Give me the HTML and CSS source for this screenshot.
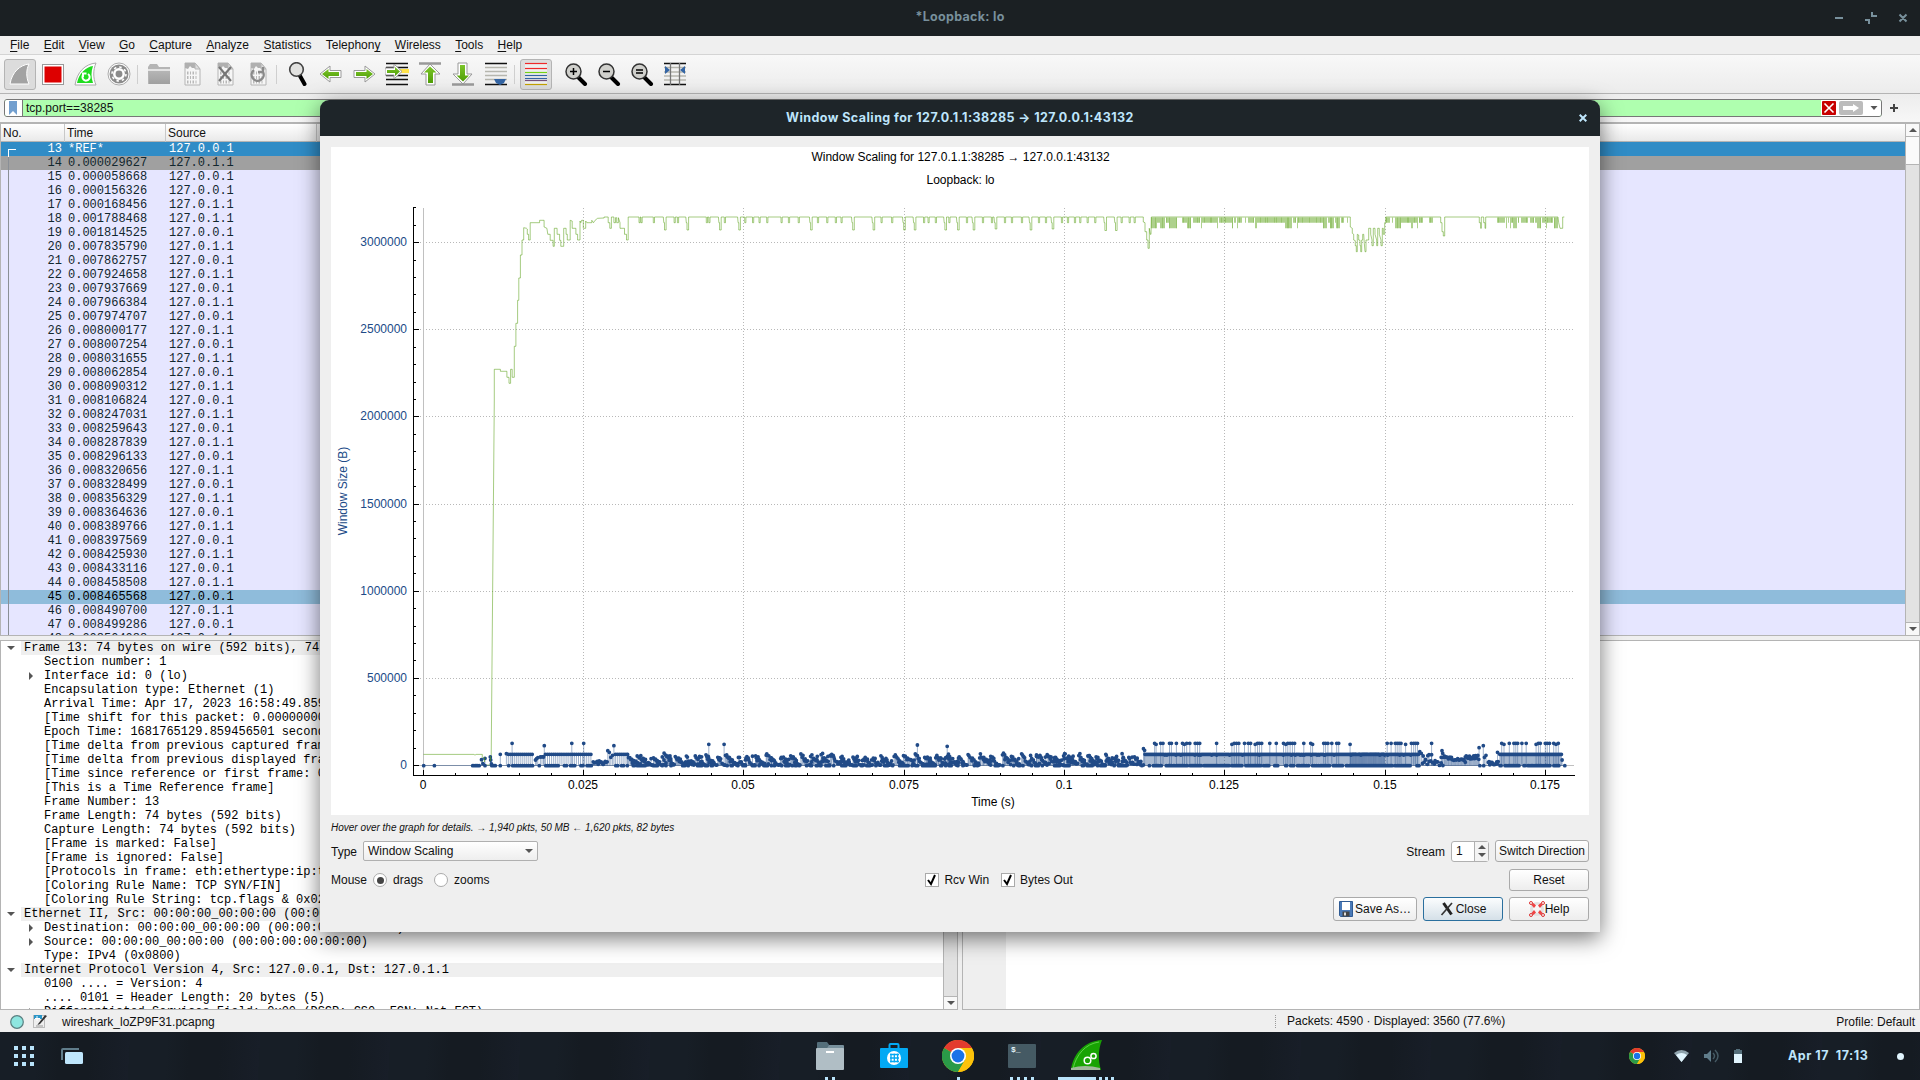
FILE: index.html
```html
<!DOCTYPE html>
<html lang="en">
<head>
<meta charset="utf-8">
<title>*Loopback: lo</title>
<link rel="stylesheet" href="styles.css">
</head>
<body>
<svg width="0" height="0" class="defs">
  <defs>
    <linearGradient id="gGreen" x1="0" y1="0" x2="0" y2="1"><stop offset="0" stop-color="#7cc52a"/><stop offset="1" stop-color="#4f9e06"/></linearGradient>
    <linearGradient id="gGrey" x1="0" y1="0" x2="0" y2="1"><stop offset="0" stop-color="#b4b4b4"/><stop offset="1" stop-color="#a0a0a0"/></linearGradient>
    <symbol id="sheet" viewBox="0 0 24 24"><path d="M5 1h10l5 6v16H5z" fill="#f6f6f6" stroke="#b4b4b4"/><path d="M5 1h10v5h-3l-2-2-2 3-3-1z" fill="#b0b0b0"/><path d="M15 1v6h5z" fill="#ddd" stroke="#b4b4b4"/><g stroke="#b8b8b8" stroke-width="3" stroke-dasharray="1.5 1.5 1 1.5"><path d="M7 11h10M7 15.500h10M7 20h10"/></g></symbol>
    <symbol id="lens" viewBox="0 0 24 24"><path d="M14 15l7 7" stroke="#000" stroke-width="4" stroke-linecap="round"/><circle cx="9.500" cy="9.500" r="7.500" fill="#d0d0cc" stroke="#333" stroke-width="1.500"/></symbol>
    <symbol id="chrome" viewBox="0 0 32 32"><circle cx="16" cy="16" r="16" fill="#fbbc05"/><path d="M16 16L2.100 8A16 16 0 0 1 29.900 8H16z" fill="#e33b2e"/><path d="M2.100 8A16 16 0 0 0 16 32l7-12-7-4z" fill="#2a9a48"/><path d="M16 8h13.900A16 16 0 0 1 16 32l7-12z" fill="#fcc20a"/><circle cx="16" cy="16" r="8" fill="#fff"/><circle cx="16" cy="16" r="6.400" fill="#1a73e8"/></symbol>
  </defs>
</svg>

<div class="desktop">
  <header class="titlebar">
    <span class="title">*Loopback: lo</span>
    <svg class="winbtns" width="90" height="36" fill="none" stroke="#78909c" stroke-width="2"><path d="M5 18h8M35 20h4v4M42 12v4h5M69.500 14.500l7 7M76.500 14.500l-7 7"/></svg>
  </header>

  <nav class="menubar">
    <span><u>F</u>ile</span><span><u>E</u>dit</span><span><u>V</u>iew</span><span><u>G</u>o</span><span><u>C</u>apture</span><span><u>A</u>nalyze</span><span><u>S</u>tatistics</span><span>Telephon<u>y</u></span><span><u>W</u>ireless</span><span><u>T</u>ools</span><span><u>H</u>elp</span>
  </nav>

  <div class="toolbar">
    <span class="tool pressed"><svg viewBox="0 0 24 24"><path d="M2 22C4 10 12 3 21 2c-3 6-3 13 0 20z" fill="#a3a3a3" stroke="#fff"/></svg></span>
    <span class="tool"><svg viewBox="0 0 24 24"><rect x="1.500" y="2.500" width="21" height="20" fill="#fff" stroke="#999"/><rect x="3.500" y="4.500" width="17" height="16" fill="#d00"/></svg></span>
    <span class="tool"><svg viewBox="0 0 24 24"><path d="M1 23C3 10 11 2 22 1c-3 7-3 15 0 22z" fill="#fff" stroke="#aaa"/><path d="M3 21C5 11 12 5 19 4c-2 6-2 11 0 17z" fill="#1fdc1f"/><path d="M9.500 12.500a3.600 3.600 0 1 0 4.500-.5M9 15V11.500h3.500" fill="none" stroke="#fff" stroke-width="2"/></svg></span>
    <span class="tool"><svg viewBox="0 0 24 24"><circle cx="12" cy="12" r="11" fill="#fff" stroke="#aaa"/><circle cx="12" cy="12" r="9.500" fill="#8b8b8b"/><circle cx="12" cy="12" r="4.700" fill="none" stroke="#fff" stroke-width="2.500"/><circle cx="12" cy="12" r="7" fill="none" stroke="#fff" stroke-width="1.500" stroke-dasharray="2.500 3"/></svg></span>
    <i class="sep"></i>
    <span class="tool"><svg viewBox="0 0 24 24"><path d="M1 5l2-3h7l2 3h11v17H1z" fill="#b5b5b5"/><path d="M1 7h22v2H1z" fill="#e4e4e4"/><path d="M2 10h21v12H2z" fill="url(#gGrey)"/></svg></span>
    <span class="tool"><svg viewBox="0 0 24 24"><use href="#sheet"/></svg></span>
    <span class="tool"><svg viewBox="0 0 24 24"><use href="#sheet"/><path d="M6 5l12 14M18 5L6 19" stroke="#777" stroke-width="2.200"/></svg></span>
    <span class="tool"><svg viewBox="0 0 24 24"><use href="#sheet"/><path d="M8 8a6 6 0 1 0 9 2M17 5v5h-5" fill="none" stroke="#8a8a8a" stroke-width="2.400"/></svg></span>
    <i class="sep wide"></i>
    <span class="tool"><svg viewBox="0 0 24 24"><path d="M13.500 13l5 9" stroke="#000" stroke-width="4" stroke-linecap="round"/><circle cx="10.500" cy="7.500" r="6.800" fill="#e2e2e0" stroke="#444" stroke-width="1.600"/></svg></span>
    <span class="tool"><svg viewBox="0 0 24 24"><path d="M1 12l10-8v4.500h11v7H11V20z" fill="#fff" stroke="#999"/><path d="M3 12l6.500-5v3H20v4H9.500v3z" fill="url(#gGreen)"/></svg></span>
    <span class="tool"><svg viewBox="0 0 24 24"><path d="M23 12L13 4v4.500H2v7h11V20z" fill="#fff" stroke="#999"/><path d="M21 12l-6.500-5v3H4v4h10.500v3z" fill="url(#gGreen)"/></svg></span>
    <span class="tool"><svg viewBox="0 0 24 24"><path d="M1 1.500h22M1 5.500h22M1 9.500h22M1 13.500h22M1 17.500h22M1 22.500h22" stroke="#111" stroke-width="1.500"/><path d="M14 7h10v4H14z" fill="#ffe34a"/><path d="M17 9.500L9 2v4H0v7h9v4z" fill="#fff" stroke="#999"/><path d="M15 9.500l-5-4.500v3H2v3h8v3z" fill="url(#gGreen)"/></svg></span>
    <span class="tool"><svg viewBox="0 0 24 24"><path d="M1 1.500h22" stroke="#999" stroke-width="2.500"/><path d="M12 2l10 10h-5v11H8V12H3z" fill="#fff" stroke="#999"/><path d="M12 4.500l6.500 6H15V21h-5V10.500H6z" fill="url(#gGreen)"/></svg></span>
    <span class="tool"><svg viewBox="0 0 24 24"><path d="M1 22.500h22" stroke="#999" stroke-width="2.500"/><path d="M12 22L2 12h5V1h9v11h5z" fill="#fff" stroke="#999"/><path d="M12 19.500l-6.500-6H9V3h5v10.500h4z" fill="url(#gGreen)"/></svg></span>
    <span class="tool"><svg viewBox="0 0 24 24"><path d="M1 1.500h22M1 22.500h22" stroke="#111" stroke-width="1.500"/><path d="M1 5.500h22M1 9.500h22M1 13.500h22M1 17.500h22" stroke="#b6b6ae" stroke-width="1.500"/><path d="M10 17h12l-2 4-4 2-4-2z" fill="#3465a4"/></svg></span>
    <i class="sep thin"></i>
    <span class="tool pressed"><svg viewBox="0 0 24 24"><path d="M1 1h22v22H1z" fill="#eee"/><g stroke-width="1.200"><path d="M1 1.500h22" stroke="#ef2929"/><path d="M1 6.500h22" stroke="#ef2929"/><path d="M1 10.500h22" stroke="#73d216"/><path d="M1 13.500h22" stroke="#3465a4"/><path d="M1 16.500h22" stroke="#3465a4"/><path d="M1 18.500h22" stroke="#75507b"/><path d="M1 22.500h22" stroke="#c4a000"/></g></svg></span>
    <i class="sep none"></i>
    <span class="tool"><svg viewBox="0 0 24 24"><use href="#lens"/><path d="M6 9.500h7M9.500 6v7" stroke="#000" stroke-width="1.500"/></svg></span>
    <span class="tool"><svg viewBox="0 0 24 24"><use href="#lens"/><path d="M6 9.500h7" stroke="#000" stroke-width="1.500"/></svg></span>
    <span class="tool"><svg viewBox="0 0 24 24"><use href="#lens"/><path d="M6 8h7M6 11h7" stroke="#000" stroke-width="1.300"/></svg></span>
    <span class="tool"><svg viewBox="0 0 24 24"><path d="M1 1.500h22M1 22.500h22" stroke="#111" stroke-width="1.500"/><path d="M1 5.500h22M1 10h22M1 14h22M1 18h22" stroke="#b6b6ae" stroke-width="1.500"/><path d="M7.500 1v22M16.500 1v22" stroke="#777" stroke-width="1.300"/><path d="M2 4l5 4-5 4zM22 4l-5 4 5 4z" fill="#3465a4"/></svg></span>
  </div>

  <div class="filterbar">
    <div class="filter">
      <span class="bookmark"><svg width="8" height="14"><path d="M0 0h8v14l-4-4-4 4z" fill="#729fcf"/></svg></span>
      <span class="expr">tcp.port==38285</span>
      <span class="acts">
        <svg width="14" height="14"><rect width="14" height="14" rx="1" fill="#c80000"/><path d="M2.500 2.500l9 9M11.500 2.500l-9 9" stroke="#fff" stroke-width="1.600"/></svg>
        <svg width="24" height="14"><rect width="24" height="14" rx="2" fill="#bcbcbc"/><path d="M4 5h10V3l6 4-6 4V9H4z" fill="#fff"/></svg>
        <svg width="10" height="14"><path d="M1.500 5h7L5 9z" fill="#555"/></svg>
      </span>
    </div>
    <svg class="plus" width="8" height="8"><path d="M4 0v8M0 4h8" stroke="#444" stroke-width="2"/></svg>
  </div>

  <section class="packets">
    <div class="plist">
      <div class="phead"><span>No.</span><span>Time</span><span>Source</span><span></span></div>
      <div class="prows" id="packetRows"></div>
    </div>
    <div class="scroll"><i class="up"></i><b class="thumb"></b><em></em><i class="down"></i></div>
  </section>

  <section class="lower">
    <div class="pane tree">
      <div class="rows" id="detailRows"></div>
      <div class="scroll"><i class="up"></i><b class="thumb tall"></b><em></em><i class="down"></i></div>
    </div>
    <div class="pane bytes"><div class="gutter"></div></div>
  </section>

  <footer class="status">
    <svg width="14" height="14"><circle cx="7" cy="7" r="6.300" fill="#8ee6e0" stroke="#5a7f80" stroke-width="1.200"/></svg>
    <svg class="note" width="15" height="15"><rect x=".5" y="1.500" width="11" height="12" fill="#eee" stroke="#bbb"/><rect x="1" y="1" width="8" height="4" fill="#2a96c8"/><path d="M4 2v5M2 4.500h5" stroke="#fff"/><path d="M5 10l7-9 2 1-7 8-2.500 1z" fill="#333"/><path d="M3 12h7" stroke="#999"/></svg>
    <span class="file">wireshark_loZP9F31.pcapng</span>
    <span class="count">Packets: 4590 · Displayed: 3560 (77.6%)</span>
    <span class="profile">Profile: Default</span>
  </footer>

  <div class="taskbar">
    <svg class="apps" width="20" height="20" fill="#b9e4fb"><path d="M0 0h4v4H0zM8 0h4v4H8zM16 0h4v4h-4zM0 8h4v4H0zM8 8h4v4H8zM16 8h4v4h-4zM0 16h4v4H0zM8 16h4v4H8zM16 16h4v4h-4z"/></svg>
    <svg class="spaces" width="22" height="16"><path d="M1 12V2q0-1 1-1h16" fill="none" stroke="#607d8b" stroke-width="2"/><rect x="4" y="4" width="18" height="12" rx="1.500" fill="#bfe6fc"/></svg>
    <div class="dock">
      <div class="app"><svg width="32" height="32"><path d="M3 7V3q0-1 1-1h9l3 4v4H3z" fill="#546e7a"/><path d="M15 5h14q1 0 1 1v4H12z" fill="#78909c"/><rect x="2" y="8" width="28" height="22" rx="1" fill="#b0bec5"/><rect x="12" y="11" width="8" height="2" fill="#fff"/></svg><p><i></i><i></i></p></div>
      <div class="app"><svg width="32" height="32"><path d="M11.500 8V5q0-1 1-1h7q1 0 1 1v3" fill="none" stroke="#03a9f4" stroke-width="2"/><rect x="2" y="8" width="28" height="20" rx="1" fill="#03a9f4"/><circle cx="16" cy="18" r="7" fill="#fff"/><path d="M12 14.500h9M12 18h9M12 21.500h9M13 13.500v9M16.300 13.500v9M19.600 13.500v9" stroke="#03a9f4" stroke-width="1.300"/></svg><p></p></div>
      <div class="app"><svg width="32" height="32"><use href="#chrome"/></svg><p><i></i></p></div>
      <div class="app"><svg width="32" height="32"><rect x="2" y="4" width="28" height="24" rx="1" fill="#455a64"/></svg><span class="prompt">$_</span><p class="four"><i></i><i></i><i></i><i></i></p></div>
      <div class="app"><svg width="32" height="32"><path d="M1 30C3 14 14 1 32 0c-4 10-4 20-1 30z" fill="#18a303"/><path d="M3 29C6 15 15 4 29 2" fill="none" stroke="#5fd04a"/><path d="M1 28q14-4 29 0v2H1z" fill="#9fb89a"/><g fill="none" stroke="#fff" stroke-width="1.500"><circle cx="17.500" cy="20.500" r="3.300"/><circle cx="23.500" cy="16" r="2.600"/></g></svg><p class="active"><b></b><i></i><i></i><i></i></p></div>
    </div>
    <svg class="tray" width="130" height="20"><svg x="2" y="2" width="16" height="16"><use href="#chrome"/></svg><path d="M47 7q7.500-6 15 0l-7.500 9z" fill="#90a4ae"/><path d="M49 9q5.500-4 11 0l-5.500 7z" fill="#e1f5fe"/><path d="M77 8h3l4-4v12l-4-4h-3z" fill="#607d8b"/><path d="M86 7q3 3 0 6M88 4q6 6 0 12" fill="none" stroke="#455a64" stroke-width="1.500"/><path d="M107 4h2V3h4v1h2v13h-8z" fill="#546e7a"/><path d="M107 8h8v9h-8z" fill="#e1f5fe"/></svg>
    <span class="clock">Apr 17&nbsp; 17:13</span>
    <i class="bell"></i>
  </div>
</div>

<div class="dialog">
  <div class="dtitle"><span>Window Scaling for 127.0.1.1:38285 → 127.0.0.1:43132</span><svg width="8" height="8"><path d="M.7 .7l6.600 6.600M7.300 .7L.7 7.300" stroke="#bfe6fc" stroke-width="2"/></svg></div>
  <div class="dbody">
    <svg class="chart" id="chart" width="1258" height="668" viewBox="331 147 1258 668"></svg>
    <p class="hint">Hover over the graph for details. → 1,940 pkts, 50 MB ← 1,620 pkts, 82 bytes</p>
    <div class="line l1">
      <span class="lab">Type</span>
      <span class="combo">Window Scaling<i></i></span>
      <span class="lab right">Stream</span>
      <span class="spin"><span>1</span><b><i class="su"></i><i class="sd"></i></b></span>
      <span class="btn switch">Switch Direction</span>
    </div>
    <div class="line l2">
      <span>Mouse</span><i class="radio on"></i><span>drags</span><i class="radio r2"></i><span>zooms</span>
      <span class="checks"><i class="check"><svg width="12" height="12"><path d="M2 6l3 4 4-9" fill="none" stroke="#000" stroke-width="2"/></svg></i><span>Rcv Win</span><i class="check c2"><svg width="12" height="12"><path d="M2 6l3 4 4-9" fill="none" stroke="#000" stroke-width="2"/></svg></i><span>Bytes Out</span></span>
      <span class="btn reset">Reset</span>
    </div>
    <div class="line l3">
      <span class="btn save"><svg width="14" height="16"><path d="M.5 .5h13v15h-12l-1-1z" fill="#4a7ab8" stroke="#2f5b94"/><rect x="3" y="1" width="8" height="8" fill="#fff"/><rect x="3.500" y="10.500" width="7" height="5" fill="#444"/><rect x="5" y="11.500" width="2" height="3" fill="#ddd"/></svg>Save As…</span>
      <span class="btn close"><svg width="14" height="14"><path d="M3.500 1l8 11.500" stroke="#222" stroke-width="3"/><path d="M12 1L1.500 13" stroke="#333" stroke-width="1.600"/></svg>Close</span>
      <span class="btn help"><svg width="16" height="16"><circle cx="8" cy="8" r="5.500" fill="none" stroke="#e2e2e2" stroke-width="3"/><g fill="#ef4444"><path d="M2.500 4l2-2 2.500 2.500L5 7zM13.500 4l-2-2L9 4.500 11 7zM2.500 12l2 2L7 11.500 5 9zM13.500 12l-2 2L9 11.500 11 9z"/></g><g fill="none" stroke="#d33"><circle cx="2" cy="2" r="1.500"/><circle cx="14" cy="2" r="1.500"/><circle cx="2" cy="14" r="1.500"/><circle cx="14" cy="14" r="1.500"/></g></svg>Help</span>
    </div>
  </div>
</div>
<script src="app.js"></script>
</body>
</html>
```
FILE: styles.css
```css
* { box-sizing: border-box; }
body { margin: 0; width: 1920px; height: 1080px; overflow: hidden; font: 12px/14px "Liberation Sans", Arial, sans-serif; color: #111; background: #efefef; }
.defs { position: absolute; }
svg { display: block; flex: none; }
u { text-underline-offset: 2px; }
.desktop { width: 1920px; height: 1080px; display: flex; flex-direction: column; }

.titlebar { height: 36px; background: #1b2023; display: grid; grid-template-columns: 90px 1fr 90px; align-items: center; }
.title { grid-column: 2; text-align: center; padding-bottom: 2px; font: 700 12.5px/16px Inter, sans-serif; letter-spacing: .3px; color: #78909c; }

.menubar { height: 18px; display: flex; gap: 14.350px; padding: 2px 0 0 10px; line-height: 14px; }
.toolbar { height: 40px; border-top: 1px solid #d4d4d4; border-bottom: 1px solid #b4b4b4; background: linear-gradient(#f8f8f8, #ececec); display: flex; align-items: center; padding-left: 4px; }
.tool { width: 32px; height: 31px; margin-right: 1px; display: flex; align-items: center; justify-content: center; border: 1px solid transparent; border-radius: 3px; }
.tool svg { width: 24px; height: 24px; }
.tool.pressed { background: #dcdcdc; border-color: #b4b4b4; }
.sep { width: 7px; height: 19px; border-left: 1px solid #cfcfcf; margin-left: 1px; margin-right: -1px; }
.sep.none { border: 0; }

.filterbar { height: 28px; display: flex; align-items: center; padding: 0 22px 0 4px; background: linear-gradient(#ededed, #f7f7f7); }
.filter { flex: 1; height: 18px; border: 1px solid #777; border-radius: 3px; background: #afffaf; display: flex; align-items: center; overflow: hidden; }
.bookmark { width: 18px; height: 16px; background: #fff; border-right: 1px solid #777; padding: 1px 0 0 4px; }
.expr { padding-left: 3px; flex: 1; }
.acts { display: flex; gap: 3px; background: #fff; height: 16px; width: 60px; padding: 1px 0 0 1px; }
.acts svg:last-child { margin-left: 3px; }
.plus { margin-left: 8px; }

.packets { height: 514px; border-top: 2px solid #b4b4b4; border-left: 1px solid #b4b4b4; border-right: 1px solid #b4b4b4; border-bottom: 1px solid #b4b4b4; display: flex; }
.plist { flex: 1; display: flex; flex-direction: column; overflow: hidden; background: #e6e6ff; }
.phead { height: 18px; flex: none; display: grid; grid-template-columns: 64px 101px 151px 1fr; background: linear-gradient(#fff, #e9e9e9); border-bottom: 1px solid #b4b4b4; line-height: 18px; }
.phead span { border-right: 1px solid #c8c8c8; padding-left: 2px; }
.phead span:last-child { border: 0; }
.prows { position: relative; flex: 1; overflow: hidden; font: 12px/14px "Liberation Mono", monospace; color: #12272e; }
.prows::before { content: ""; position: absolute; left: 7px; top: 7px; bottom: 0; border-left: 1px solid #8a8f96; }
.prows::after { content: ""; position: absolute; left: 7px; top: 7px; width: 7px; height: 7px; border: solid #fff; border-width: 1px 0 0 1px; }
.prow { height: 14px; display: grid; grid-template-columns: 61px 101px 1fr; column-gap: 0; white-space: pre; }
.prow span:first-child { text-align: right; }
.prow span + span { padding-left: 6px; }
.prow.sel { background: #308cc6; color: #fff; }
.prow.syn { background: #a0a0a0; }
.prow.cur { background: #8fbcdb; color: #000; }

.scroll { width: 14px; flex: none; display: flex; flex-direction: column; border-left: 1px solid #b4b4b4; background: #e2e2e2; }
.scroll i { height: 13px; background: #f8f8f8; border-bottom: 1px solid #b4b4b4; display: flex; align-items: center; justify-content: center; }
.scroll i.down { border: 0; border-top: 1px solid #b4b4b4; }
.scroll i::before { content: ""; border: 4px solid transparent; border-top: 0; border-bottom: 4px solid #555; }
.scroll i.down::before { border-bottom: 0; border-top: 4px solid #555; }
.thumb { height: 28px; background: #fafafa; border-bottom: 1px solid #b4b4b4; }
.thumb.tall { height: 190px; }
.scroll em { flex: 1; }

.lower { height: 374px; padding-top: 4px; display: flex; gap: 4px; }
.pane { border: 1px solid #b4b4b4; background: #fff; display: flex; overflow: hidden; }
.tree { width: 958px; }
.bytes { flex: 1; }
.gutter { width: 43px; background: #efefef; }
.rows { flex: 1; overflow: hidden; font: 12px/14px "Liberation Mono", monospace; color: #000; white-space: pre; }
.drow { height: 14px; padding-left: 43px; display: flex; align-items: center; }
.drow.top { padding-left: 20px; }
.drow.top span { flex: 1; background: #efefef; padding-left: 3px; }
.drow i { width: 0; margin-left: -15px; margin-right: 11px; border: 4px solid transparent; border-left-color: #555; border-right: 0; }
.drow.top i { border: 4px solid transparent; border-top-color: #555; border-bottom: 0; margin: 0 6px 0 -14px; }

.status { height: 22px; display: flex; align-items: center; padding: 1px 5px 0 10px; background: #efefef; }
.note { margin-left: 9px; }
.file { margin-left: 14px; width: 1213px; }
.count { padding-left: 11px; height: 13px; line-height: 13px; border-left: 1px dotted #999; }
.profile { margin-left: auto; }

.taskbar { height: 48px; background: repeating-linear-gradient(93deg, #171e26 0 37px, #151b22 60px 90px, #181e28 130px), #161c22; display: flex; align-items: center; padding-left: 14px; position: relative; }
.spaces { margin-left: 27px; }
.dock { display: flex; gap: 32px; margin-left: 731px; height: 48px; }
.app { width: 32px; padding-top: 8px; position: relative; display: flex; flex-direction: column; justify-content: space-between; align-items: center; }
.prompt { position: absolute; left: 5px; top: 13px; font: bold 8px/10px "Liberation Mono", monospace; color: #e6f4fa; }
.app p { margin: 0; height: 3px; display: flex; gap: 4px; }
.app i, .app p b { width: 3px; height: 3px; background: #b9e4fb; flex: none; }
.app p.four { gap: 4px; }
.app p.active { gap: 3px; align-self: flex-start; margin-left: -12px; }
.app p.active b { width: 38px; }
.tray { margin-left: 525px; }
.clock { margin-left: 31px; width: 94px; white-space: nowrap; font: 700 12.5px/16px Inter, sans-serif; letter-spacing: .5px; padding-bottom: 1px; color: #bfe6fc; }
.bell { width: 7px; height: 7px; border-radius: 50%; background: #e1f5fe; margin-left: 15px; }

.dialog { position: absolute; left: 320px; top: 100px; width: 1280px; height: 832px; border-radius: 10px 10px 0 0; background: #efefef; box-shadow: 0 6px 22px rgba(0,0,0,.55); display: flex; flex-direction: column; }
.dtitle { height: 36px; flex: none; background: #1e2529; border-radius: 9px 9px 0 0; display: grid; grid-template-columns: 20px 1fr 20px; align-items: center; font: 700 12.5px/16px Inter, sans-serif; letter-spacing: .44px; color: #bfe6fc; }
.dtitle span { grid-column: 2; text-align: center; padding-bottom: 1px; }
.dtitle svg { margin-left: -1px; }
.dbody { flex: 1; padding: 11px 11px 0; display: flex; flex-direction: column; }
.chart { background: #fff; }
.chart text { font: 12px "Liberation Sans", sans-serif; }
.hint { margin: 6px 0 0; font-size: 10px; line-height: 14px; font-style: italic; letter-spacing: -.01px; }
.line { display: flex; align-items: center; }
.l1 { height: 22px; margin-top: 5px; }
.combo { margin-left: 6px; width: 175px; height: 20px; border: 1px solid #b0b0b0; border-radius: 2px; background: linear-gradient(#fff, #eee); padding: 0 4px 0 4px; display: flex; align-items: center; justify-content: space-between; }
.combo i { border: 4px solid transparent; border-top-color: #555; border-bottom: 0; }
.lab { padding-top: 2px; }
.right { margin-left: auto; margin-right: 6px; }
.spin { width: 38px; height: 21px; border: 1px solid #b0b0b0; border-radius: 3px; background: #fff; display: flex; align-items: center; }
.spin > span { flex: 1; padding-left: 4px; }
.spin b { width: 14px; height: 19px; background: #f4f4f4; border-left: 1px solid #b0b0b0; display: flex; flex-direction: column; align-items: center; justify-content: center; gap: 4px; }
.spin i { border: 4px solid transparent; }
.spin .su { border-top: 0; border-bottom-color: #555; }
.spin .sd { border-bottom: 0; border-top-color: #555; }
.btn { border: 1px solid #aaa; border-radius: 3px; background: linear-gradient(#fff, #ededed); display: flex; align-items: center; justify-content: center; height: 22px; white-space: nowrap; }
.switch { width: 94px; margin-left: 6px; }
.l2 { height: 22px; margin-top: 7px; }
.radio { width: 14px; height: 14px; border-radius: 50%; border: 1px solid #aaa; background: #fff; margin: 0 6px; display: grid; place-items: center; }
.radio.on::before { content: ""; width: 7px; height: 7px; border-radius: 50%; background: #444; }
.r2 { margin-left: 11px; }
.checks { display: flex; align-items: center; margin-left: 436px; }
.check { width: 14px; height: 14px; border: 1px solid #aaa; background: #fff; margin-right: 5px; }
.c2 { margin-left: 12px; }
.reset { width: 80px; margin-left: auto; }
.l3 { height: 24px; margin-top: 6px; justify-content: flex-end; gap: 6px; }
.l3 .btn { height: 24px; width: 80px; }
.l3 .save { width: 84px; gap: 2px; }
.l3 .close { border-color: #2a6f9e; background: linear-gradient(#fbfdfe, #d5e0e8); gap: 2px; }
```
FILE: app.js
```js
const packets = `*REF*,0.000029627,0.000058668,0.000156326,0.000168456,0.001788468,0.001814525,0.007835790,0.007862757,0.007924658,0.007937669,0.007966384,0.007974707,0.008000177,0.008007254,0.008031655,0.008062854,0.008090312,0.008106824,0.008247031,0.008259643,0.008287839,0.008296133,0.008320656,0.008328499,0.008356329,0.008364636,0.008389766,0.008397569,0.008425930,0.008433116,0.008458508,0.008465568,0.008490700,0.008499286,0.008504088`.split(',');
const style = { 13: 'sel', 14: 'syn', 45: 'cur' };
document.getElementById('packetRows').innerHTML = packets.map((t, i) => {
  const no = 13 + i;
  const fromServer = no === 17 || (no % 2 === 0 && no !== 16);
  return `<div class="prow ${style[no] || ''}"><span>${no}</span><span>${t}</span><span>127.0.${fromServer ? 1 : 0}.1</span></div>`;
}).join('');

// Prefix: "-" open top-level node, "+" collapsed child node.
const details = `-Frame 13: 74 bytes on wire (592 bits), 74 bytes captured (592 bits)
Section number: 1
+Interface id: 0 (lo)
Encapsulation type: Ethernet (1)
Arrival Time: Apr 17, 2023 16:58:49.859456501
[Time shift for this packet: 0.000000000 seconds]
Epoch Time: 1681765129.859456501 seconds
[Time delta from previous captured frame]
[Time delta from previous displayed frame]
[Time since reference or first frame: 0.000000000]
[This is a Time Reference frame]
Frame Number: 13
Frame Length: 74 bytes (592 bits)
Capture Length: 74 bytes (592 bits)
[Frame is marked: False]
[Frame is ignored: False]
[Protocols in frame: eth:ethertype:ip:tcp]
[Coloring Rule Name: TCP SYN/FIN]
[Coloring Rule String: tcp.flags &amp; 0x02]
-Ethernet II, Src: 00:00:00_00:00:00 (00:00:00:00:00:00)
+Destination: 00:00:00_00:00:00 (00:00:00:00:00:00)
+Source: 00:00:00_00:00:00 (00:00:00:00:00:00)
Type: IPv4 (0x0800)
-Internet Protocol Version 4, Src: 127.0.0.1, Dst: 127.0.1.1
0100 .... = Version: 4
.... 0101 = Header Length: 20 bytes (5)
+Differentiated Services Field: 0x00 (DSCP: CS0, ECN: Not-ECT)`.split('\n');
document.getElementById('detailRows').innerHTML = details.map(d => {
  const top = d[0] === '-', node = top || d[0] === '+';
  return `<div class="drow ${top ? 'top' : ''}">${node ? '<i></i>' : ''}<span>${node ? d.slice(1) : d}</span></div>`;
}).join('');

// ---- window scaling chart ----
const out = [];
const X0 = 423.5, Y0 = 765.5, DX = 160.36, DY = 87.15;
const gx = i => Math.floor(X0 + i * DX - .5) + .5;
const gy = i => Math.round(Y0 - i * DY - .5) + .5;
let grid = '', ticks = '';
for (let i = 1; i < 8; i++) grid += `M${gx(i)} 208V775`;
for (let i = 1; i < 7; i++) grid += `M414 ${gy(i)}H1573`;
out.push(`<path d="${grid}" stroke="#b8b8b8" stroke-dasharray="1 2" fill="none"/>`);
out.push(`<path d="M${X0} 208V775M414 ${Y0}H1574" stroke="#c0c0c0" fill="none"/>`);

// Receive window
const g = [[423.5, 754.4], [474, 754.4], [475, 755.2], [476, 754.4], [482.3, 754.4], [482.3, 761], [484, 765], [490.5, 765], [491.2, 758], [494.3, 400]];
const a = (x, y) => g.push([320 + x / 2.45, 190 + y / 3]);
[[427, 538], [442, 538], [442, 544], [458, 544], [458, 562], [463, 562], [463, 580], [467, 580], [467, 538], [471, 538], [471, 562], [476, 562], [476, 469], [480, 469], [480, 400], [484, 400], [484, 331], [487, 331], [487, 264], [491, 264], [491, 195], [495, 195], [495, 150], [499, 150], [499, 113], [506, 115], [508, 117], [508, 133], [511, 133], [511, 150], [515, 150], [515, 98], [538, 98], [538, 91], [549, 91], [549, 111], [556, 115], [558, 133], [564, 133], [564, 151], [571, 151], [571, 169], [574, 169], [574, 115], [581, 115], [581, 133], [587, 133], [587, 151], [590, 151], [590, 169], [597, 169], [597, 115], [603, 115], [603, 133], [606, 133], [606, 150], [613, 150], [613, 91], [618, 93], [618, 115], [627, 115], [627, 133], [631, 133], [631, 150], [637, 150], [637, 93], [639, 98], [641, 91], [645, 91], [645, 115], [651, 115], [651, 93], [654, 98], [666, 98], [666, 91], [670, 98], [674, 91], [680, 85], [696, 84], [696, 81], [706, 81], [706, 98], [710, 98], [710, 115], [714, 115], [714, 81], [720, 81], [720, 98], [724, 98], [724, 83], [727, 83], [727, 98], [731, 98], [731, 83], [735, 98], [735, 115], [746, 115], [746, 133], [751, 133], [751, 150], [755, 150], [755, 81]].forEach(p => a(...p));
const TOP = 217, D1 = 222.7;
const dip = (x, y) => {
  if (y > 224) g.push([x - 2, TOP], [x - 1.5, D1], [x - .8, D1], [x - .8, y], [x + .8, y], [x + .8, TOP]);
  else g.push([x - .6, TOP], [x - .6, y], [x + .6, y], [x + .6, TOP]);
};
const dips = [];
[783, 788, 818, 869, 877, 948, 954, 992, 1042, 1061, 1077, 1096, 1131, 1149, 1173, 1220, 1243, 1264, 1278, 1376, 1402, 1480, 1491, 1509, 1542].forEach(x => dips.push([320 + x / 2.45, D1]));
[846, 901, 981, 1028, 1204, 1307, 1357, 1432, 1458, 1533, 1564].forEach(x => dips.push([320 + x / 2.45, 230]));
[[967, D1], [974, 230], [983, D1], [992, D1], [996, 229], [1005, D1], [1012, D1], [1022, D1], [1031, 230], [1039, D1], [1046, D1], [1053, 229], [1062, D1], [1068, D1], [1075, D1]].forEach(d => dips.push(d));
[1, 23, 46, 125, 149, 164].forEach(x => dips.push([1080 + x / 3, D1]));
[77, 109].forEach(x => dips.push([1080 + x / 3, 230.5]));
dips.sort((p, q) => p[0] - q[0]).forEach(d => dip(...d));
const b = (x, y) => g.push([1080 + x / 3, 190 + y / 3]);
// Dense runs [from, to, depth]: updates closer together than a pixel
let fill = '', hatch = '';
const runs = list => list.forEach(([x0, x1, y]) => {
  const l = Math.round(1080 + x0 / 3), r = Math.max(l + 1, Math.round(1080 + x1 / 3)), bot = 190 + y / 3;
  fill += `M${l} 217.500H${r}V${bot.toFixed(1)}H${l}z`;
  for (let x = l; x < r; x++) if (x % 7 === 0 || x % 11 === 0) hatch += `M${x + .5} 217.500V${bot.toFixed(1)}`;
});
[[190, 81], [190, 96], [195, 98], [195, 125], [200, 125], [200, 150], [204, 150], [204, 175], [208, 175], [208, 115], [211, 133], [213, 133], [214, 81]].forEach(p => b(...p));
runs([[214, 230, 115], [231, 240, 98], [241, 255, 115], [257, 267, 98], [268, 292, 115], [306, 320, 98], [322, 334, 115], [339, 361, 98], [362, 363, 115], [366, 411, 98], [412, 414, 115], [417, 455, 98], [457, 460, 115], [462, 469, 98], [470, 472, 115], [474, 486, 98], [494, 496, 98], [504, 523, 98], [525, 530, 115], [532, 615, 98], [616, 636, 115], [638, 648, 98], [650, 652, 115], [654, 729, 98], [730, 742, 115], [744, 749, 98], [750, 762, 115], [764, 767, 98], [768, 780, 115], [782, 793, 98], [801, 804, 98]]);
[[811, 81], [811, 111], [817, 115], [817, 130], [821, 133], [821, 150], [826, 152], [826, 167], [829, 167], [829, 185], [832, 185], [832, 133], [836, 135], [836, 150], [840, 151], [840, 167], [842, 167], [842, 185], [845, 185], [845, 150], [848, 150], [848, 133], [851, 133], [853, 160], [855, 185], [858, 185], [858, 150], [866, 150], [866, 115], [872, 115], [872, 133], [876, 150], [876, 167], [880, 167], [880, 115], [885, 115], [885, 133], [890, 150], [890, 167], [893, 167], [893, 115], [898, 115], [898, 133], [903, 150], [903, 167], [907, 167], [907, 115], [910, 115], [910, 133], [914, 133], [914, 98], [917, 98], [917, 81]].forEach(p => b(...p));
runs([[919, 930, 98], [935, 937, 98], [945, 962, 115], [964, 992, 98], [994, 998, 115], [1000, 1011, 98], [1012, 1015, 115], [1017, 1030, 98], [1048, 1058, 98]]);
[[1082, 81], [1082, 98], [1086, 98], [1086, 125], [1090, 125], [1090, 138], [1094, 138], [1094, 81], [1198, 81], [1198, 98], [1202, 98], [1202, 115], [1204, 115], [1204, 81], [1211, 81], [1211, 98], [1215, 98], [1215, 115], [1217, 115], [1217, 81]].forEach(p => b(...p));
runs([[1252, 1275, 98], [1277, 1280, 115], [1283, 1287, 98], [1289, 1291, 115], [1294, 1298, 98], [1300, 1312, 115], [1315, 1318, 98], [1324, 1344, 98], [1350, 1361, 98], [1366, 1370, 98], [1372, 1383, 115], [1385, 1397, 98], [1398, 1400, 115], [1402, 1420, 98], [1422, 1434, 115]]);
[[1434, 81], [1436, 98], [1440, 115], [1448, 115], [1448, 81], [1453, 81]].forEach(p => b(...p));
out.push(`<path d="${fill}" fill="#4e9a06" fill-opacity=".46"/><path d="${hatch}" stroke="#4e9a06" stroke-opacity=".25"/>`);
out.push(`<path d="M${g.map(p => p[0].toFixed(1) + ' ' + p[1].toFixed(1)).join('L')}" fill="none" stroke="#4e9a06" stroke-opacity=".5"/>`);

// Bytes out: impulses with dots
let seed = 7;
const rnd = () => (seed = (seed * 16807) % 2147483647) / 2147483647;
const S = 2.6133;
const dots = [];
const L = (x, y) => dots.push([400 + x / S, 720 + y / 3]);
const R = (x, y) => dots.push([1000 + x / S, 720 + y / 3]);
[62, 90, 190, 193, 197, 200, 203, 207, 222, 240, 243, 246, 249].forEach(x => L(x, 137));
[[213, 119], [217, 131], [222, 115], [236, 111], [237, 120], [239, 132], [262, 103], [278, 101]].forEach(p => L(...p));
L(262, 137);
const pairs = (f, x0, x1, st, zero) => { for (let x = x0; x <= x1; x += st) { f(x, 103); if (rnd() < zero) f(x + 1, 137); } };
pairs(L, 283, 350, 5.2, .85); pairs(L, 380, 504, 5.4, .75); pairs(L, 563, 594, 5, .8);
[[293, 70], [377, 77], [449, 70], [480, 70], [559, 77], [807, 73], [847, 73], [1352, 75], [1430, 79], [354, 120], [357, 116], [360, 113], [364, 137], [367, 111], [371, 111], [375, 111], [543, 92], [547, 97], [551, 112], [555, 106]].forEach(p => L(...p));
for (let x = 505; x < 542; x += 2.6) L(x, 122 + rnd() * 12);
const saw = (f, starts, end) => starts.forEach((s, i) => {
  const e = starts[i + 1] || end, peak = 95 + rnd() * 12, n = Math.round((e - s) / 2.6);
  for (let k = 0; k < n; k++) {
    const t = k / n;
    f(s + k * 2.6 + rnd() * 2, Math.min(135, peak + t * 34 + rnd() * 12));
    if (rnd() < .28) f(s + k * 2.6, 137);
    if (rnd() < .32) f(s + k * 2.6, 108 + rnd() * 26);
  }
});
saw(L, [594, 625, 662, 690, 718, 748, 770, 798, 830, 850, 883, 903, 928, 955, 995, 1020, 1047, 1075, 1100, 1123, 1152, 1182, 1212, 1236, 1256, 1290, 1315, 1345, 1370, 1400, 1430, 1458, 1483, 1515, 1545], 1568);
saw(R, [5, 28, 55, 80, 95, 123, 140, 165, 205, 228, 250, 275, 302, 317, 335, 350], 376);
R(375, 86); R(378, 91);
for (let x = 379; x < 1096; x += 2.6) {
  R(x, 103 + (rnd() < .1 ? 2 : 0));
  const gap = (x > 632 && x < 640) || (x > 705 && x < 716) || (x > 727 && x < 738) || (x > 895 && x < 903);
  if (!gap && rnd() < (x > 915 && x < 1007 ? 1 : .72)) R(x + 1, 137);
}
for (let x = 916; x < 1007; x += 2.4) R(x, 103);
[404, 408, 420, 426, 443, 448, 461, 477, 482, 488, 496, 510, 516, 522, 566, 606, 612, 618, 624, 639, 649, 655, 667, 673, 678, 684, 705, 722, 741, 747, 752, 758, 764, 770, 794, 812, 817, 846, 851, 857, 867, 880, 885, 915, 1012, 1022, 1033, 1038, 1043, 1048, 1060, 1075, 1081, 1086, 1091, 1128, 1311, 1317, 1331, 1343, 1348, 1353, 1364, 1375, 1401, 1407, 1412, 1425, 1430, 1436, 1447, 1453, 1459].forEach((x, i) => R(x, i % 7 === 1 ? 73 : 70));
[[1097, 95], [1101, 100], [1106, 108], [1104, 130], [1112, 118], [1118, 107], [1121, 104], [1128, 104], [1131, 128], [1137, 122], [1142, 126], [1155, 92], [1157, 100], [1153, 112], [1252, 83], [1263, 77], [1300, 97], [1469, 120], [1476, 137], [1467, 103], [1254, 137], [1266, 112], [1264, 137], [1270, 106]].forEach(p => R(...p));
for (let x = 1108; x < 1160; x += 4.5) R(x, 120 + rnd() * 17);
for (let x = 1160; x < 1218; x += 2) R(x, 112 + (x - 1160) * .2 + rnd() * 8 - 4);
for (let x = 1216; x < 1252; x += 2.2) R(x, 106 + rnd() * 14);
for (let x = 1276; x < 1304; x += 2) R(x, 122 + rnd() * 13);
for (let x = 1306; x < 1467; x += 2.6) { R(x, 103); if (rnd() < .62) R(x + 1, 137); }
out.push(`<path d="${dots.filter(d => d[1] < 765).map(d => `M${d[0].toFixed(1)} ${d[1].toFixed(1)}V765.5`).join('')}M423.5 765.5H1566" stroke="#204a87" stroke-opacity=".42" fill="none"/>`);
out.push(`<path d="${dots.map(d => `M${d[0].toFixed(1)} ${d[1].toFixed(1)}h0`).join('')}" stroke="#204a87" stroke-width="3.8" stroke-linecap="round" fill="none"/>`);
out.push('<path d="M484.500 757v5M490.500 756v5" stroke="#4e9a06" stroke-opacity=".6"/>');

// Axes and labels
for (let i = 0; i <= 35; i++) { const x = Math.floor(X0 + i * DX / 5 - .5) + .5; ticks += `M${x} ${i % 5 ? 773 : 770}V775`; }
for (let i = 0; i <= 32; i++) { const y = Math.round(Y0 - i * DY / 5 - .5) + .5; ticks += `M414 ${y}H${i % 5 ? 416 : 419}`; }
out.push(`<path d="M413.500 207V776M413 775.500H1575${ticks}" stroke="#000" fill="none"/>`);
['0', '0.025', '0.05', '0.075', '0.1', '0.125', '0.15', '0.175'].forEach((t, i) => out.push(`<text x="${gx(i) - .5}" y="789" text-anchor="middle">${t}</text>`));
for (let i = 0; i <= 6; i++) out.push(`<text x="407" y="${gy(i) + 3.500}" text-anchor="end" fill="#204a87">${i * 500000}</text>`);
out.push('<text x="960.500" y="161" text-anchor="middle">Window Scaling for 127.0.1.1:38285 → 127.0.0.1:43132</text>');
out.push('<text x="960.500" y="184" text-anchor="middle">Loopback: lo</text>');
out.push('<text x="993" y="806" text-anchor="middle">Time (s)</text>');
out.push('<text transform="translate(347 491) rotate(-90)" text-anchor="middle" fill="#204a87">Window Size (B)</text>');
document.getElementById('chart').innerHTML = out.join('');
```
